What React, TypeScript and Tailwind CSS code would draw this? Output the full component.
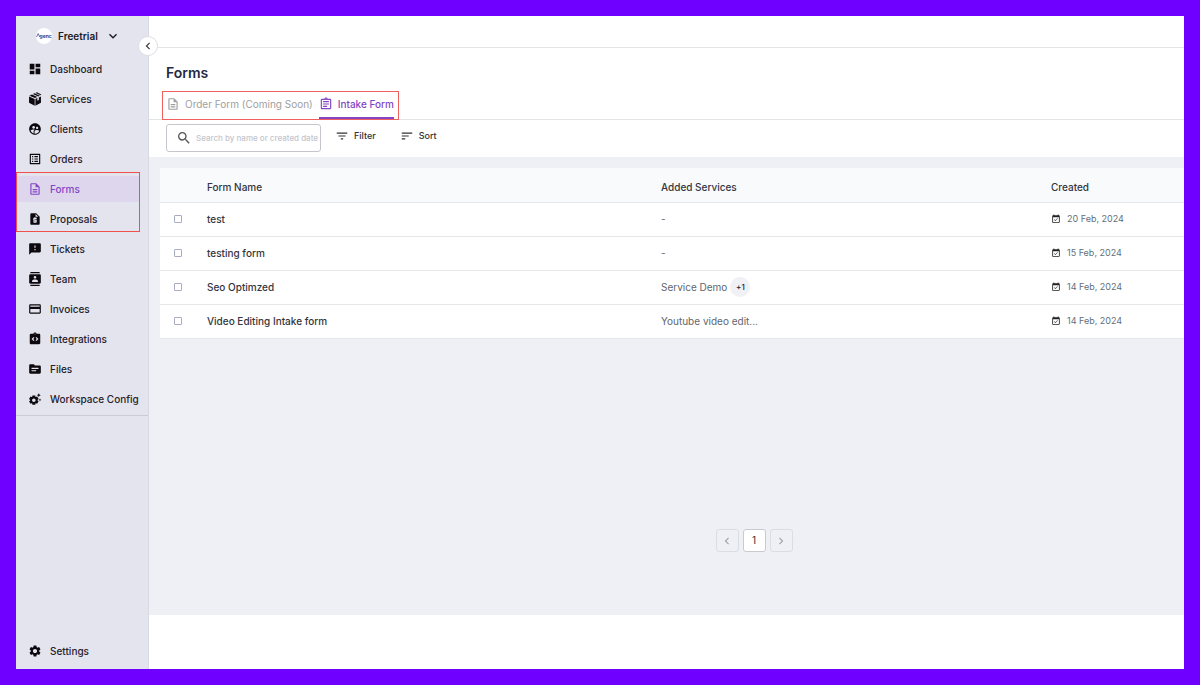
import { useState, type ComponentType } from 'react';
import {
  MdChevronLeft,
  MdChevronRight,
  MdContacts,
  MdCreditCard,
  MdDashboard,
  MdEventAvailable,
  MdFeedback,
  MdFilterList,
  MdIntegrationInstructions,
  MdKeyboardArrowDown,
  MdListAlt,
  MdOutlineAssignment,
  MdOutlineDescription,
  MdRequestQuote,
  MdSearch,
  MdSettings,
  MdSettingsSuggest,
  MdSort,
  MdSource,
  MdSupervisedUserCircle,
} from 'react-icons/md';
import clsx from 'clsx';

type NavItem = {
  label: string;
  icon: ComponentType<{ className?: string }>;
};

type FormRow = {
  id: number;
  name: string;
  service: string;
  extra?: number;
  created: string;
};

function PackageIcon({ className }: { className?: string }) {
  return (
    <svg viewBox="0 0 24 24" fill="currentColor" className={className}>
      <path d="M8.300 3.400 11 2.200 20.500 6.300 17.600 7.700Z" />
      <path d="M12.800 1.600 15.300.6 22.800 4.400 21.600 5.500Z" />
      <path d="M6.800 4.200 16 8.500 12 10.400 2.300 6.300Z" />
      <path d="M1.800 7.600 11.500 11.800V23.400L1.800 18.600Z" />
      <path d="M12.700 11.800 16 10.400V15.200L18.600 13.900V9.300L22.200 7.600V18.600L12.700 23.400Z" />
    </svg>
  );
}

const topNav: NavItem[] = [
  { label: 'Dashboard', icon: MdDashboard },
  { label: 'Services', icon: PackageIcon },
  { label: 'Clients', icon: MdSupervisedUserCircle },
  { label: 'Orders', icon: MdListAlt },
];

const formNav: NavItem[] = [
  { label: 'Forms', icon: MdOutlineDescription },
  { label: 'Proposals', icon: MdRequestQuote },
];

const bottomNav: NavItem[] = [
  { label: 'Tickets', icon: MdFeedback },
  { label: 'Team', icon: MdContacts },
  { label: 'Invoices', icon: MdCreditCard },
  { label: 'Integrations', icon: MdIntegrationInstructions },
  { label: 'Files', icon: MdSource },
  { label: 'Workspace Config', icon: MdSettingsSuggest },
];

const forms: FormRow[] = [
  { id: 1, name: 'test', service: '-', created: '20 Feb, 2024' },
  { id: 2, name: 'testing form', service: '-', created: '15 Feb, 2024' },
  { id: 3, name: 'Seo Optimzed', service: 'Service Demo', extra: 1, created: '14 Feb, 2024' },
  { id: 4, name: 'Video Editing Intake form', service: 'Youtube video edit...', created: '14 Feb, 2024' },
];

function NavLink({ item, active = false }: { item: NavItem; active?: boolean }) {
  const Icon = item.icon;

  return (
    <a
      href={`#${item.label.toLowerCase().replace(' ', '-')}`}
      className={clsx(
        'flex h-[26px] items-center gap-2 pl-3 whitespace-nowrap',
        active ? 'bg-[#ddd6ec] text-[#8446c4]' : 'text-[#25222b]',
      )}
    >
      <Icon className={clsx('h-3.5 w-3.5 shrink-0', !active && 'text-[#0c080d]')} />
      {item.label}
    </a>
  );
}

function Sidebar() {
  return (
    <aside className="relative flex w-[133px] shrink-0 flex-col border-r border-[#d9d9e2] bg-[#e4e4ef] text-[10px] font-medium">
      <button type="button" className="flex h-10 items-center pl-5 font-semibold text-[#1c1b22]">
        <svg viewBox="0 0 16 16" className="mr-1.5 h-4 w-4">
          <circle cx="8" cy="8" r="8" fill="#fff" />
          <path d="M0.500 9 L2.200 5.500 L3.800 9" fill="none" stroke="#5660a8" strokeWidth="0.9" />
          <text x="3.500" y="9.600" fontSize="5" fontWeight="700" fontFamily="Inter, sans-serif" fill="#3a3f8f">
            genc
          </text>
        </svg>
        Freetrial
        <MdKeyboardArrowDown className="ml-[7px] h-4 w-4" />
      </button>

      <button
        type="button"
        aria-label="Collapse sidebar"
        className="absolute top-5 -right-2.5 z-10 flex h-5 w-5 items-center justify-center rounded-full border border-[#dedee4] bg-white text-[#333]"
      >
        <MdChevronLeft className="h-3.5 w-3.5" />
      </button>

      <nav className="flex flex-col gap-1 border-b border-[#cbcbd7] pb-[3px]">
        {topNav.map((item) => (
          <NavLink key={item.label} item={item} />
        ))}
        <div className="relative mr-2 flex flex-col gap-1">
          {formNav.map((item) => (
            <NavLink key={item.label} item={item} active={item.label === 'Forms'} />
          ))}
          <span className="pointer-events-none absolute inset-x-0 -top-1 bottom-0 border border-[#f0504c]" />
        </div>
        {bottomNav.map((item) => (
          <NavLink key={item.label} item={item} />
        ))}
      </nav>

      <div className="mt-auto pb-[5px]">
        <NavLink item={{ label: 'Settings', icon: MdSettings }} />
      </div>
    </aside>
  );
}

function Tabs() {
  return (
    <div className="flex border-b border-[#e3e4e8] px-[13px]">
      <div
        role="tablist"
        className="-mb-px flex h-[29px] gap-1.5 border border-[#f0605c] pr-1 pl-[3px] text-[10px]"
      >
        <button type="button" role="tab" aria-selected="false" className="flex items-center gap-[5px] pb-[3px] text-[#a0a0a0]">
          <MdOutlineDescription className="h-3.5 w-3.5" />
          Order Form (Coming Soon)
        </button>
        <button
          type="button"
          role="tab"
          aria-selected="true"
          className="flex items-center gap-[5px] border-b-2 border-[#8446c4] pb-px font-medium text-[#8446c4]"
        >
          <MdOutlineAssignment className="h-3.5 w-3.5" />
          Intake Form
        </button>
      </div>
    </div>
  );
}

function Toolbar() {
  return (
    <div className="flex h-[37px] items-start px-[17px] pt-1 text-[9px] font-medium text-[#333]">
      <label className="flex h-7 w-[155px] items-center gap-1 rounded-[3px] border border-[#c4c6cb] pl-[9px]">
        <MdSearch className="h-4 w-4 shrink-0 text-[#555]" />
        <input
          type="text"
          aria-label="Search forms"
          placeholder="Search by name or created date"
          className="w-full min-w-0 text-[8px] outline-none placeholder:text-[#c3c5cd]"
        />
      </label>
      <button type="button" className="ml-3.5 flex h-6 items-center gap-[5px]">
        <MdFilterList className="h-3.5 w-3.5" />
        Filter
      </button>
      <button type="button" className="ml-6 flex h-6 items-center gap-[5px]">
        <MdSort className="h-3.5 w-3.5" />
        Sort
      </button>
    </div>
  );
}

function FormsTable() {
  const [selected, setSelected] = useState<number[]>([]);

  function toggle(id: number) {
    setSelected((prev) => (prev.includes(id) ? prev.filter((i) => i !== id) : [...prev, id]));
  }

  return (
    <table className="w-full table-fixed bg-white text-left text-[10px] text-[#33353d]">
      <colgroup>
        <col className="w-[47px]" />
        <col />
        <col className="w-[390px]" />
        <col className="w-[133px]" />
      </colgroup>
      <thead className="bg-[#f8fafc]">
        <tr className="h-[34px] border-b border-[#e6e8ea]">
          <td />
          <th className="pt-1.5 font-medium">Form Name</th>
          <th className="pt-1.5 font-medium">Added Services</th>
          <th className="pt-1.5 font-medium">Created</th>
        </tr>
      </thead>
      <tbody>
        {forms.map((form) => (
          <tr key={form.id} className="h-[34px] border-b border-[#e6e7ea]">
            <td className="pl-3.5">
              <input
                type="checkbox"
                aria-label={`Select ${form.name}`}
                checked={selected.includes(form.id)}
                onChange={() => toggle(form.id)}
                className="block h-2 w-2 appearance-none rounded-[1px] border border-[#a7acbf] checked:bg-[#8446c4]"
              />
            </td>
            <td className="font-medium">{form.name}</td>
            <td className="text-[#62666d]">
              <div className="flex items-center gap-[3px]">
                {form.service}
                {form.extra && (
                  <span className="flex h-5 w-5 items-center justify-center rounded-full bg-[#f0f0f5] text-[8px] font-medium text-[#222]">
                    +{form.extra}
                  </span>
                )}
              </div>
            </td>
            <td className="text-[9px] text-[#62707b]">
              <div className="flex items-center gap-1.5">
                <MdEventAvailable className="h-2.5 w-2.5 text-[#222]" />
                {form.created}
              </div>
            </td>
          </tr>
        ))}
      </tbody>
    </table>
  );
}

function Pagination() {
  return (
    <div className="flex justify-center gap-1 pl-[164px]">
      <button
        type="button"
        aria-label="Previous page"
        className="flex h-[23px] w-[23px] items-center justify-center rounded-[3px] border border-[#dcdde2] text-[#a2a3a8]"
      >
        <MdChevronLeft className="h-3.5 w-3.5" />
      </button>
      <button
        type="button"
        aria-current="page"
        className="flex h-[23px] w-[23px] items-center justify-center rounded-[3px] border border-[#c9cacf] bg-white text-[10px] text-[#333]"
      >
        1
      </button>
      <button
        type="button"
        aria-label="Next page"
        className="flex h-[23px] w-[23px] items-center justify-center rounded-[3px] border border-[#dcdde2] text-[#a2a3a8]"
      >
        <MdChevronRight className="h-3.5 w-3.5" />
      </button>
    </div>
  );
}

export default function App() {
  return (
    <div className="flex min-h-screen bg-[#6f00ff] p-4 font-['Inter',sans-serif]">
      <div className="flex flex-1 bg-white">
        <Sidebar />
        <main className="flex min-w-0 flex-1 flex-col">
          <header className="h-8 border-b border-[#e3e4e8]" />
          <h1 className="px-[17px] pt-[15px] pb-2 text-sm leading-5 font-semibold text-[#1f2a44]">Forms</h1>
          <Tabs />
          <Toolbar />
          <section className="mb-[54px] flex flex-1 flex-col justify-between bg-[#eff0f5] pt-[11px] pb-[63px] pl-[11px]">
            <FormsTable />
            <Pagination />
          </section>
        </main>
      </div>
    </div>
  );
}
